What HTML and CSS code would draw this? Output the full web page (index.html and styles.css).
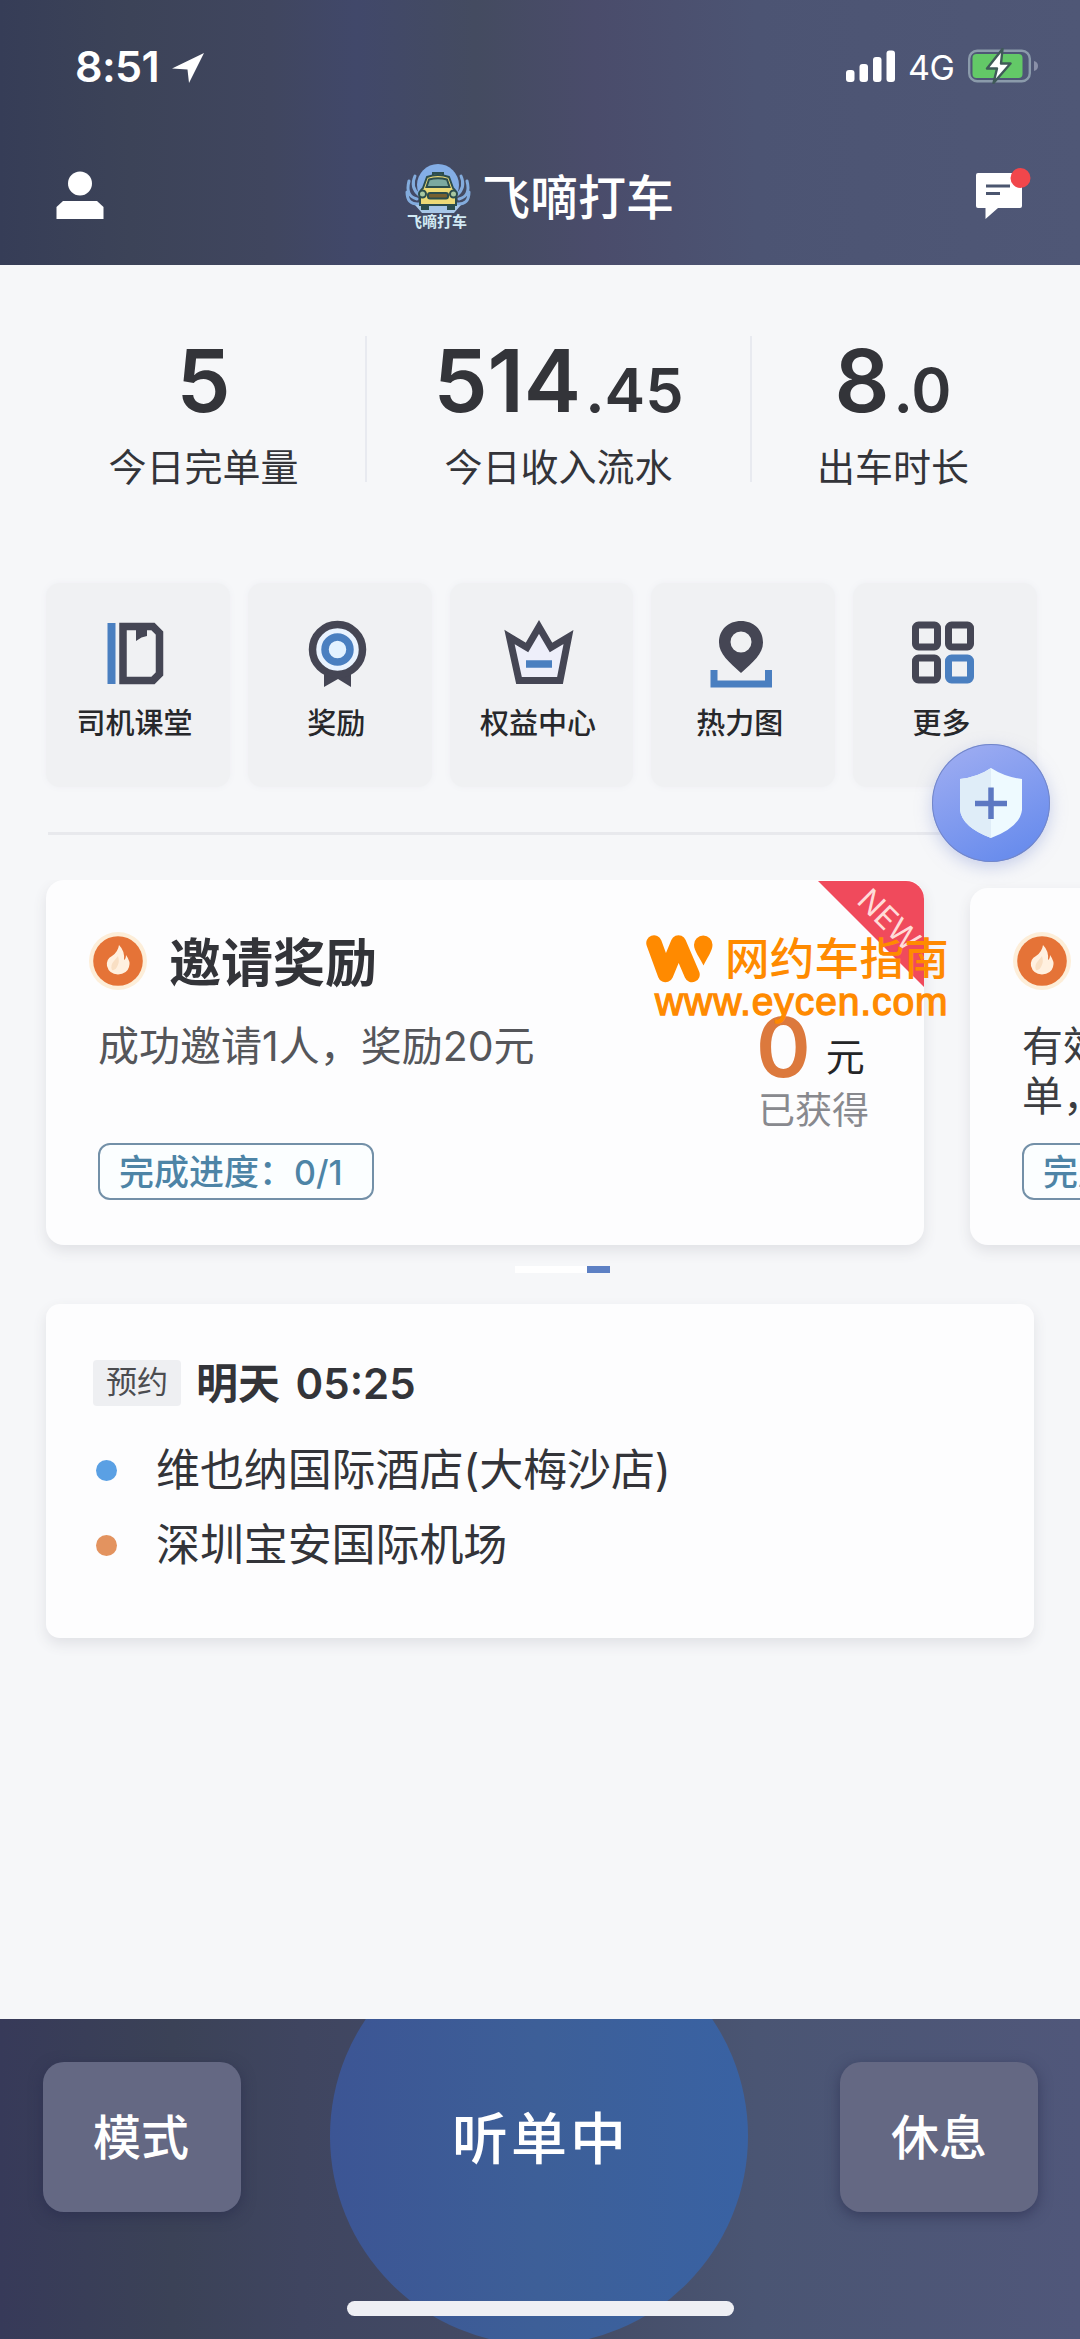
FILE: index.html
```html
<!DOCTYPE html>
<html lang="zh-CN">
<head>
<meta charset="utf-8">
<title>飞嘀打车</title>
<link rel="stylesheet" href="styles.css">
</head>
<body>
<div class="screen">
  <header class="header">
    <div class="status">
      <span class="time">8:51</span>
      <svg class="locate" width="34" height="32" viewBox="0 0 34 32"><path d="M33 1 1 16.500 16.500 17.500 18 31Z" fill="#fff"/></svg>
      <svg class="signal" width="50" height="32" viewBox="0 0 50 32" fill="#fff"><rect x="0" y="20" width="8.500" height="12" rx="3"/><rect x="13.500" y="14" width="8.500" height="18" rx="3"/><rect x="27" y="7" width="8.500" height="25" rx="3"/><rect x="40.500" y="0.500" width="8.500" height="31.500" rx="3"/></svg>
      <span class="network">4G</span>
      <svg class="battery" width="72" height="36" viewBox="0 0 72 36">
        <rect x="1.200" y="2.700" width="60.600" height="30.600" rx="8" fill="none" stroke="#8b9bab" stroke-width="2.400"/>
        <rect x="4.500" y="6" width="50" height="24" rx="4" fill="#63c967"/>
        <path d="M66 13q4 1 4 5t-4 5Z" fill="#8a90a8"/>
        <path d="M34.500 1 19 20.500H29L25.500 35 42.500 15.500H33Z" fill="#fff" stroke="#3f5a58" stroke-width="2.400" stroke-linejoin="round"/>
      </svg>
    </div>
    <div class="nav">
      <svg class="user" width="48" height="48" viewBox="0 0 48 48" fill="#fff"><circle cx="24" cy="12.500" r="12"/><path d="M0.500 48V36L7 30H41L47.500 36V48Z"/></svg>
      <div class="brand">
        <svg width="72" height="72" viewBox="0 0 72 72">
          <circle cx="36" cy="23" r="21" fill="#84aee6"/>
          <g fill="none" stroke="#83acdd" stroke-width="3" stroke-linecap="round">
            <path d="M13 14Q8 25 17 33M7 19Q3 34 15 37M5 30Q5 43 17 42M59 14Q64 25 55 33M65 19Q69 34 57 37M67 30Q67 43 55 42"/>
          </g>
          <path d="M13 43h46l-7 8H20Z" fill="#a6c6e7"/>
          <g stroke="#2c4d4c" stroke-width="2">
            <path d="M31 14V11H41V14Z" fill="#567b75"/>
            <path d="M20 42v5h6v-4M46 43v4h6v-5" fill="#2c4d4c"/>
            <path d="M25 15Q36 11 47 15L51 26Q55 29 54 35V43H18V35Q17 29 21 26Z" fill="#edda76"/>
            <path d="M27 17.500Q36 15 45 17.500L47.500 25H24.500Z" fill="#7ba9a0"/>
            <rect x="26" y="31" width="20" height="5.500" rx="2" fill="#77602f"/>
            <circle cx="20.500" cy="32" r="3.500" fill="#a8c8a1"/><circle cx="51.500" cy="32" r="3.500" fill="#a8c8a1"/>
          </g>
          <text class="logo-text" x="35" y="65" text-anchor="middle">飞嘀打车</text>
        </svg>
        <span class="title">飞嘀打车</span>
      </div>
      <svg class="message" width="58" height="58" viewBox="0 0 58 58"><path d="M2 10Q2 8 4 8H46Q48 8 48 10V41Q48 43 46 43H24L11.500 54V43H4Q2 43 2 41Z" fill="#fff"/><path d="M12 21H36M12 28.500H26" stroke="#4b566f" stroke-width="3"/><circle cx="46.500" cy="13" r="10" fill="#f1464b"/></svg>
    </div>
  </header>

  <main class="content">
    <section class="stats">
      <div class="stat"><div class="num">5</div><div class="cap">今日完单量</div></div>
      <div class="stat"><div class="num">514<small>.45</small></div><div class="cap">今日收入流水</div></div>
      <div class="stat"><div class="num">8<small>.0</small></div><div class="cap">出车时长</div></div>
    </section>

    <section class="tiles">
      <a class="tile"><svg width="70" height="70" viewBox="0 0 70 70"><path d="M6.500 5h8v61h-8Z" fill="#4a7fc0"/><path d="M22 8.500H52L58.500 15V56L52 62.500H22Z" fill="none" stroke="#454654" stroke-width="7.500"/><path d="M35 8H46V18L40.500 19.500 35 23Z" fill="#454654"/></svg><span>司机课堂</span></a>
      <a class="tile"><svg width="70" height="70" viewBox="0 0 70 70"><path d="M21 54V69L35 61 48 69V54Z" fill="#454654"/><circle cx="34.500" cy="31.500" r="25" fill="#e9f3ff" stroke="#454654" stroke-width="7.500"/><circle cx="34.500" cy="31.500" r="12.500" fill="#e3f2ff" stroke="#4a7fc0" stroke-width="7.500"/></svg><span>奖励</span></a>
      <a class="tile"><svg width="70" height="70" viewBox="0 0 70 70"><path d="M5.500 19 23 29.500 35 9 47 29.500 64.500 19 56 62.500H15Z" fill="#eeeffa" stroke="#454654" stroke-width="7"/><path d="M22 46H48" stroke="#4a7fc0" stroke-width="7.500"/></svg><span>权益中心</span></a>
      <a class="tile"><svg width="70" height="70" viewBox="0 0 70 70"><path fill-rule="evenodd" d="M35 3C22 3 13 12 13 24.500 13 36 23 44 35 55 47 44 57 36 57 24.500 57 12 48 3 35 3ZM35 13.500A10.500 10.500 0 1 1 35 34.500 10.500 10.500 0 1 1 35 13.500Z" fill="#454654"/><path d="M8 52V66H62.500V52" fill="none" stroke="#4a7fc0" stroke-width="7"/></svg><span>热力图</span></a>
      <a class="tile"><svg width="70" height="70" viewBox="0 0 70 70" fill="none" stroke="#454654" stroke-width="7"><rect x="7.500" y="7" width="22" height="22" rx="3"/><rect x="40.500" y="7" width="22" height="22" rx="3"/><rect x="7.500" y="40" width="22" height="22" rx="3"/><rect x="40.500" y="40" width="22" height="22" rx="3" stroke="#4a7fc0"/></svg><span>更多</span></a>
      <button class="fab" aria-label="安全"><svg width="118" height="118" viewBox="0 0 118 118"><path d="M59 24Q73 33 90 35V66Q88 83 59 94 30 83 28 66V35Q46 33 59 24Z" fill="#eefaff"/><path d="M59 24V94Q30 83 28 66V35Q46 33 59 24Z" fill="#dfedf8"/><path d="M59 43.500V75M43 59.500H75" stroke="#5d78c2" stroke-width="5.500"/></svg></button>
    </section>

    <hr class="rule">

    <section class="promos">
      <article class="card promo">
        <div class="promo-head">
          <svg class="fire" width="66" height="66" viewBox="0 0 66 66"><circle cx="33" cy="33" r="29" fill="#fdeed9"/><circle cx="33" cy="33" r="24.800" fill="#e57337"/><path d="M34 17Q40 23 39 32 41 31 41 27 46 34 44 39 42 46 33 46.500 24 46 22 38 21 31 27 28 33 24 34 17Z" fill="#fff0df"/><path d="M33 28Q35 34 32 39 30 43 27 42 25 37 29 33Z" fill="#f9dfc3"/></svg>
          <h2>邀请奖励</h2>
        </div>
        <div class="promo-body">
          <p>成功邀请1人，奖励20元</p>
          <div class="earned"><div><b>0</b><span>元</span></div><em>已获得</em></div>
        </div>
        <span class="progress">完成进度：<b>0/1</b></span>
        <div class="ribbon"><span>NEW</span></div>
      </article>
      <article class="card promo next">
        <div class="promo-head">
          <svg class="fire" width="66" height="66" viewBox="0 0 66 66"><circle cx="33" cy="33" r="29" fill="#fdeed9"/><circle cx="33" cy="33" r="24.800" fill="#e57337"/><path d="M34 17Q40 23 39 32 41 31 41 27 46 34 44 39 42 46 33 46.500 24 46 22 38 21 31 27 28 33 24 34 17Z" fill="#fff0df"/><path d="M33 28Q35 34 32 39 30 43 27 42 25 37 29 33Z" fill="#f9dfc3"/></svg>
        </div>
        <div class="promo-body"><p>有效<br>单，</p></div>
        <span class="progress">完成</span>
      </article>
      <div class="watermark">
        <div class="wm-name"><svg width="68" height="48" viewBox="0 0 68 48"><path d="M8 8 19.500 39.500 32.500 8 46 39.500" fill="none" stroke="#ff8a00" stroke-width="15.500" stroke-linecap="round" stroke-linejoin="round"/><path d="M57.500 30.500C54 23 48 16 48 9.700A9.200 9.200 0 0 1 66.500 9.700C66.500 16 61 23 57.500 30.500Z" fill="#ff8a00"/></svg><span>网约车指南</span></div>
        <div class="wm-url">www.eycen.com</div>
      </div>
    </section>
    <div class="pager"><i></i><i class="on"></i></div>

    <section class="card trip">
      <div class="trip-head"><span class="tag">预约</span><strong>明天 05:25</strong></div>
      <div class="stop from">维也纳国际酒店(大梅沙店)</div>
      <div class="stop to">深圳宝安国际机场</div>
    </section>
  </main>

  <footer class="footer">
    <button class="side">模式</button>
    <div class="listening">听单中</div>
    <button class="side">休息</button>
    <div class="home"></div>
  </footer>
</div>
</body>
</html>
```
FILE: styles.css
```css
* { box-sizing: border-box; }
body {
  margin: 0;
  background: #f6f7f9;
  font-family: Inter, "Noto Sans CJK SC", sans-serif;
  color: #333439;
}
button { border: 0; padding: 0; font: inherit; color: inherit; }
svg { display: block; flex: none; }

.screen {
  width: 1080px;
  height: 2339px;
  display: flex;
  flex-direction: column;
  overflow: hidden;
}

/* Header */
.header {
  flex: none;
  height: 265px;
  background: linear-gradient(90deg, #363d57 0, #3c4358 12%, #40465f 25%, #41486a 33%, #444b60 44%, #4a4c6b 55%, #4c5473 70%, #4f5776 100%);
  color: #fff;
}
.status {
  display: flex;
  align-items: center;
  height: 132px;
  padding: 0 40px 0 75px;
}
.time { font-size: 43px; font-weight: 600; line-height: 50px; width: 95px; letter-spacing: -0.6px; }
.locate { margin: 4px 0 0 1px; }
.signal { margin-left: auto; }
.network { font-size: 34px; line-height: 40px; width: 59px; padding-left: 12px; margin-top: 4px; letter-spacing: -0.5px; }
.battery { margin-left: 13px; }
.nav {
  display: grid;
  grid-template-columns: 200px 1fr 200px;
  align-items: start;
  padding: 30px 48px 0 56px;
}
.user { margin-top: 9px; }
.brand { display: flex; justify-content: center; align-items: center; gap: 8px; margin-right: 12px; }
.title { font-size: 48px; line-height: 72px; font-weight: 500; }
.logo-text { font-size: 15px; font-weight: 700; fill: #d2eaf4; }
.message { justify-self: end; margin-top: 3px; }

/* Main */
.content { flex: none; height: 1754px; padding-top: 71px; position: relative; }
.stats {
  display: grid;
  grid-template-columns: 323px 385px 284px;
  padding-left: 42px;
  text-align: center;
}
.stat + .stat { border-left: 2px solid #e8eaf0; }
.num { font-size: 86px; font-weight: 600; line-height: 91px; letter-spacing: 0; }
.num small { font-size: 61px; line-height: 1; margin-left: 4px; letter-spacing: 0; }
.cap { font-size: 38px; line-height: 30px; margin-top: 25px; }

.tiles {
  position: relative;
  display: grid;
  grid-template-columns: repeat(5, 1fr);
  gap: 18px;
  margin: 101px 43px 0 46px;
}
.tile {
  height: 204px;
  padding: 35px 4px 0 0;
  border-radius: 14px;
  background: #f0f1f3;
  box-shadow: 0 0 6px #eeeff3;
  display: flex;
  flex-direction: column;
  align-items: center;
}
.tile span { font-size: 29px; font-weight: 500; line-height: 36px; color: #27282b; margin: 18px 3px 0 0; }
.fab {
  position: absolute;
  left: 886px;
  top: 161px;
  width: 118px;
  height: 118px;
  border-radius: 50%;
  background: linear-gradient(155deg, #a2aff2, #6a8ded 85%);
  box-shadow: 0 0 0 1px #7286c8 inset, 0 5px 16px #9aa8dc80;
}
.rule { height: 3px; margin: 45px 48px 45px; border: 0; background: #e8e9ed; }

.card { background: #fdfdfe; border-radius: 18px; box-shadow: 0 6px 14px #e0e1e5; }
.promos { position: relative; display: flex; gap: 46px; padding-left: 46px; overflow: hidden; margin-bottom: -40px; padding-bottom: 40px; }
.promo { position: relative; flex: none; width: 878px; height: 365px; padding: 48px 52px 0; }
.promo.next { height: 357px; margin-top: 8px; padding-top: 40px; }
.promo-head { display: flex; align-items: center; height: 66px; gap: 18px; margin-left: -13px; }
.promo-head h2 { margin: 0; font-size: 52px; font-weight: 600; line-height: 66px; padding-top: 5px; }
.promo-body { display: flex; justify-content: space-between; height: 149px; padding-top: 27px; }
.promo-body p { margin: 0; font-size: 41px; line-height: 50px; color: #55565a; }
.promo.next p { color: #3c3d41; }
.earned { width: 120px; margin: -7px -6px 0 0; }
.earned div { display: flex; align-items: center; gap: 15px; height: 66px; line-height: 66px; }
.earned b { font-size: 83px; font-weight: 600; color: #dc793d; margin-left: -2px; }
.earned span { font-size: 39px; color: #242527; padding-top: 20px; }
.earned em { display: block; font-size: 37px; font-style: normal; line-height: 40px; margin-top: 11px; color: #88898e; }
.progress {
  display: inline-block;
  width: 276px;
  height: 57px;
  line-height: 54px;
  padding: 0 19px;
  border: 2px solid #7390a8;
  border-radius: 12px;
  font-size: 35px;
  font-weight: 500;
  color: #4d84a6;
  background: #fbfeff;
  white-space: nowrap;
}
.progress b { font-weight: 500; font-size: 34px; }
.ribbon {
  position: absolute;
  right: 0;
  top: 1px;
  width: 106px;
  height: 106px;
  border-top-right-radius: 18px;
  background: #f04a5c;
  clip-path: polygon(0 0, 100% 0, 100% 100%);
}
.ribbon span {
  position: absolute;
  left: 21px;
  top: 22px;
  width: 100px;
  line-height: 34px;
  text-align: center;
  font-size: 31px;
  color: #ffdcd9;
  transform: rotate(45deg);
}
.watermark { position: absolute; left: 646px; top: 54px; color: #ff8a00; }
.wm-name { display: flex; align-items: center; gap: 11px; font-size: 44.500px; line-height: 50px; font-weight: 500; letter-spacing: 0.300px; }
.wm-url { margin-left: 9px; font: 39px/46px "Liberation Sans", sans-serif; letter-spacing: 0.900px; -webkit-text-stroke: 1.300px #ff8a00; margin-top: -5px; }

.pager { display: flex; margin: 21px 0 0 515px; position: relative; }
.pager i { width: 72px; height: 7px; background: #fff; }
.pager .on { width: 23px; background: #5d80c4; }

.trip { margin: 31px 46px 0; height: 334px; padding: 56px 47px; border-radius: 14px; }
.trip-head { display: flex; align-items: center; gap: 15px; height: 46px; }
.tag { width: 88px; height: 46px; line-height: 44px; text-align: center; font-size: 31px; background: #eeeff2; border-radius: 4px; color: #4b4c50; }
.trip-head strong { font-size: 42px; font-weight: 600; line-height: 46px; word-spacing: 5px; padding-top: 1px; }
.stop { display: flex; align-items: center; height: 75px; font-size: 44px; line-height: 75px; letter-spacing: -0.1px; white-space: nowrap; }
.stop::before { content: ""; width: 21px; height: 21px; border-radius: 50%; margin: 0 39px 0 3px; background: #5aa0e4; }
.from { margin-top: 27px; }
.to::before { background: #e3935f; }

/* Footer */
.footer {
  position: relative;
  flex: none;
  height: 320px;
  overflow: hidden;
  display: grid;
  grid-template-columns: 198px 1fr 198px;
  align-items: start;
  padding: 43px 42px 0 43px;
  background: linear-gradient(90deg, #373a59 0, #3b4257 16%, #3f4560 28%, #454d67 55%, #4a5573 70%, #50577a 100%);
  color: #fff;
}
.side {
  height: 150px;
  border-radius: 21px;
  background: #646883;
  box-shadow: 0 4px 14px #282c4c99;
  font-size: 48px;
  font-weight: 500;
  line-height: 152px;
}
.side:first-child { text-indent: -2px; }
.listening {
  justify-self: center;
  width: 418px;
  height: 418px;
  margin: -135px 4px 0 0;
  border-radius: 50%;
  background: linear-gradient(90deg, #3c5594, #3d5f98 50%, #3962a3);
  font-size: 56px;
  font-weight: 500;
  letter-spacing: 3px;
  text-indent: 4px;
  line-height: 424px;
  text-align: center;
}
.home { position: absolute; left: 347px; top: 282px; width: 387px; height: 15px; border-radius: 8px; background: #eeeff4; }
```
